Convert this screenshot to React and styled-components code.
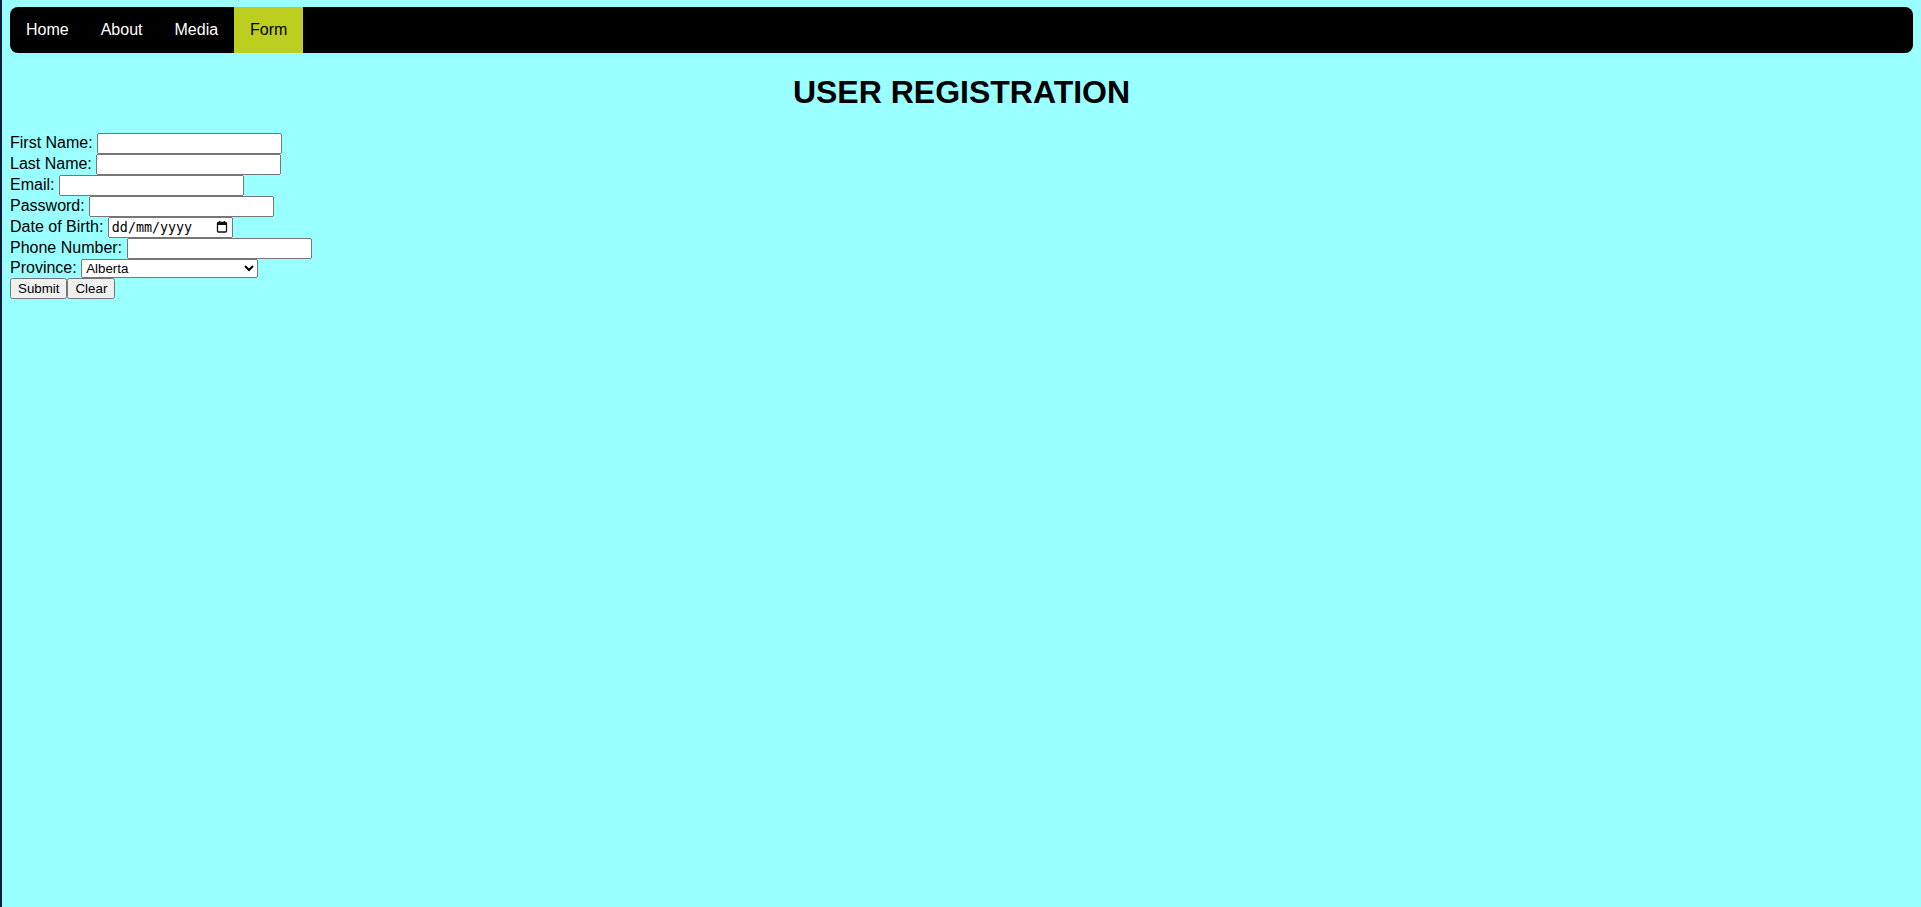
import styled, { createGlobalStyle } from 'styled-components';

const GlobalStyle = createGlobalStyle`
  html {
    background-color: #99ffff;
    border-left: 2px solid #0b1d3a;
    min-height: 100%;
  }
  body {
    margin: 7px 8px 8px 8px;
    font-family: "Liberation Sans", Arial, sans-serif;
    font-size: 16px;
    color: #000;
    background-color: #99ffff;
  }
`;

const NavBar = styled.ul`
  display: flex;
  list-style-type: none;
  margin: 0;
  padding: 0;
  background-color: #000;
  border-radius: 8px;
  overflow: hidden;
`;

const NavLink = styled.a`
  display: block;
  padding: 14px 16px;
  line-height: 18px;
  text-decoration: none;
  color: ${props => (props.active ? '#000' : '#fff')};
  background-color: ${props => (props.active ? '#bccf1e' : 'transparent')};
`;

const Title = styled.h1`
  text-align: center;
  font-size: 32px;
  margin: 21.44px 0;
`;

const Form = styled.form`
  input, select, button {
    font-family: "Liberation Sans", Arial, sans-serif;
  }
`;

const DateField = styled.span`
  position: relative;
  display: inline-block;
`;

const DateInput = styled.input`
  && {
    font-family: "DejaVu Sans Mono", "Liberation Mono", monospace;
  }
  font-size: 13.33px;
  width: 125px;
  box-sizing: border-box;
  padding-right: 20px;
  &::placeholder {
    color: #000;
  }
`;

const CalendarIcon = styled.svg`
  position: absolute;
  right: 5px;
  top: 50%;
  transform: translateY(-50%);
  width: 12px;
  height: 12px;
  pointer-events: none;
`;

const provinces = [
  'Alberta',
  'British Columbia',
  'Manitoba',
  'New Brunswick',
  'Newfoundland & Labrador',
  'Nova Scotia',
  'Ontario',
  'Prince Edward Island',
  'Quebec',
  'Saskatchewan',
];

const App = () => {
  return (
    <>
      <GlobalStyle />
      <NavBar>
        <li><NavLink href="#">Home</NavLink></li>
        <li><NavLink href="#">About</NavLink></li>
        <li><NavLink href="#">Media</NavLink></li>
        <li><NavLink href="#" active>Form</NavLink></li>
      </NavBar>
      <Title>USER REGISTRATION</Title>
      <Form onSubmit={e => e.preventDefault()}>
        <label>First Name: </label><input type="text" /><br />
        <label>Last Name: </label><input type="text" /><br />
        <label>Email: </label><input type="email" /><br />
        <label>Password: </label><input type="password" /><br />
        <label>Date of Birth: </label>
        <DateField>
          <DateInput type="text" placeholder="dd/mm/yyyy" />
          <CalendarIcon viewBox="0 0 12 12">
            <rect x="1.5" y="1.5" width="9" height="9.5" rx="1" fill="none" stroke="#111" strokeWidth="1.3" />
            <rect x="1.5" y="1.5" width="9" height="2.5" fill="#111" />
            <rect x="3" y="0" width="1.3" height="2" fill="#111" />
            <rect x="7.7" y="0" width="1.3" height="2" fill="#111" />
          </CalendarIcon>
        </DateField><br />
        <label>Phone Number: </label><input type="tel" /><br />
        <label>Province: </label>
        <select>
          {provinces.map(p => <option key={p}>{p}</option>)}
        </select><br />
        <button type="submit">Submit</button>
        <button type="reset">Clear</button>
      </Form>
    </>
  );
};

export default App;
